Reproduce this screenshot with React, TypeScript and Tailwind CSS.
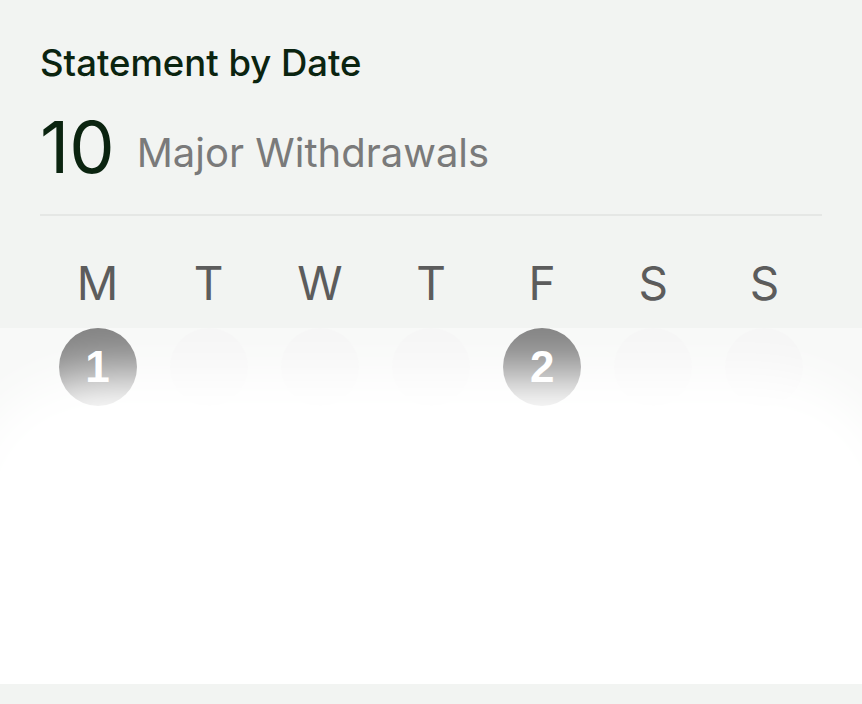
const days = [
  { label: 'M', count: 1 },
  { label: 'T', count: 0 },
  { label: 'W', count: 0 },
  { label: 'T', count: 0 },
  { label: 'F', count: 2 },
  { label: 'S', count: 0 },
  { label: 'S', count: 0 },
];

const App = () => {
  return (
    <div className="relative min-h-[704px] w-full overflow-hidden bg-[#f2f4f2] font-['Inter',sans-serif]">
      <div className="px-10 pt-[43px]">
        <h2 className="text-[36.5px] leading-[40px] font-medium text-[#0b2410]">
          Statement by Date
        </h2>
        <div className="mt-[28px] flex items-end gap-[22px]">
          <span className="text-[72px] leading-none text-[#0b2410]">10</span>
          <span className="mb-[10px] text-[40px] leading-none text-[#7a7a7a]">
            Major Withdrawals
          </span>
        </div>
        <div className="mt-[31px] h-[2px] w-full bg-[#e5e7e5]" />
        <div className="grid grid-cols-7 px-[2px]">
          {days.map((day, i) => (
            <div key={i} className="flex flex-col items-center">
              <span className="mt-[44px] text-[46px] leading-none text-[#5c5c5c]">
                {day.label}
              </span>
              <div
                className={`mt-[22px] flex h-[78px] w-[78px] items-center justify-center rounded-full ${
                  day.count ? 'bg-[#1e1e1e]' : 'bg-[#efefef]'
                }`}
              >
                {day.count > 0 && (
                  <span className="font-['Liberation_Sans',sans-serif] text-[44px] font-bold leading-none text-white">
                    {day.count}
                  </span>
                )}
              </div>
            </div>
          ))}
        </div>
      </div>
      {/* white fade over the calendar */}
      <div className="pointer-events-none absolute left-0 right-0 top-[328px] h-[356px] overflow-hidden bg-white/45">
        <div className="absolute left-[-40px] right-[-40px] top-[46px] bottom-[-80px] rounded-t-[140px] bg-white blur-[26px]" />
      </div>
    </div>
  );
};

export default App;
